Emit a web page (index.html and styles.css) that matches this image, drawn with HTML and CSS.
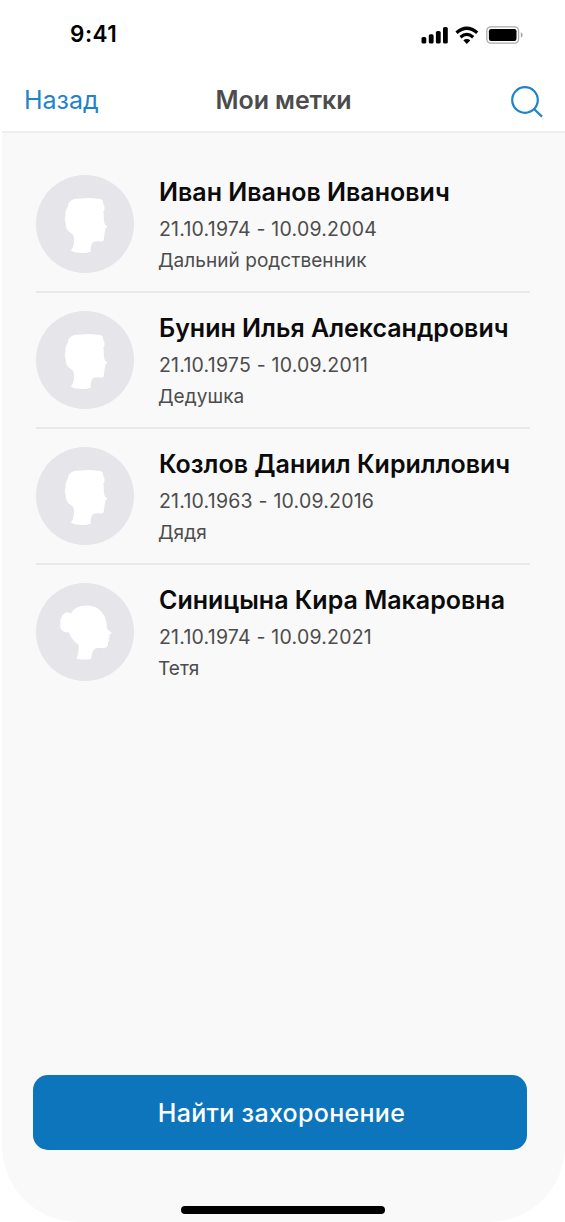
FILE: index.html
```html
<!DOCTYPE html>
<html lang="ru">
<head>
<meta charset="utf-8">
<title>Мои метки</title>
<link rel="stylesheet" href="styles.css">
</head>
<body>
<svg class="symbols" aria-hidden="true">
  <symbol id="man" viewBox="33 29 295 295">
    <circle cx="180.500" cy="176.500" r="147.500" fill="#e5e5ea"/>
    <path fill="#fff" d="M138 257Q148 244 147 228V214Q142 204 131 199Q121 188 123 176Q117 162 122 150Q120 136 129 124Q129 111 140 105Q150 98 169 100Q196 96 222 101Q235 101 235 112Q235 118 239 122V135L235 140Q238 145 237 160Q238 172 240 176L247 185Q247 188 241 190L242 196L239 203L240 209L237 213Q240 228 231 230Q213 227 205 231Q198 237 197 260Q182 265 163 263Q149 263 138 257Z"/>
  </symbol>
  <symbol id="woman" viewBox="33 32 295 295">
    <circle cx="180.500" cy="179.500" r="147.500" fill="#e5e5ea"/>
    <path fill="#fff" d="M155 259Q163 242 161 219Q140 204 132 181Q114 182 107 170Q105 160 106 147Q109 124 125 121Q132 120 138 124Q150 101 181 100Q211 99 228 116Q241 130 244 145Q247 158 246 166Q247 172 253 176L260 182Q261 185 254 188L255 195L251 200L253 205L250 209Q252 220 246 225Q240 230 225 227Q208 227 203 240L199 261Q180 265 155 259Z"/>
  </symbol>
</svg>
<div class="screen">
  <header class="header">
    <div class="status">
      <span class="time">9:41</span>
      <svg class="status-icons" viewBox="0 0 104 20">
        <g fill="#000">
          <rect x="1.500" y="13" width="4.800" height="6.500" rx="1.600"/>
          <rect x="8.800" y="10.200" width="4.800" height="9.300" rx="1.600"/>
          <rect x="15.900" y="7" width="4.800" height="12.500" rx="1.600"/>
          <rect x="23" y="3" width="4.800" height="16.500" rx="1.600"/>
        </g>
        <g fill="none" stroke="#000" stroke-width="3.200">
          <path d="M36.500 8.800Q46.800 -.3 57.200 8.800"/>
          <path d="M40.500 13.200Q46.800 7.500 53.200 13.200"/>
        </g>
        <path d="M43.300 16.200Q46.800 13.700 50.400 16.200L46.800 20Z"/>
        <rect x="66.800" y="2.900" width="31.800" height="16.200" rx="4" fill="none" stroke="#aaa" stroke-width="1.300"/>
        <rect x="68.900" y="5" width="27.600" height="12" rx="2.200"/>
        <path d="M100.800 8.300Q102.800 9.200 102.800 11T100.800 13.700Z" fill="#aaa"/>
      </svg>
    </div>
    <nav class="nav">
      <a class="back">Назад</a>
      <h1 class="title">Мои метки</h1>
      <svg class="search" viewBox="0 0 32 32" fill="none" stroke="#1f83c9" stroke-width="2.200">
        <circle cx="14" cy="14" r="12.800"/>
        <path d="M23 23L31 30.600"/>
      </svg>
    </nav>
  </header>
  <main class="list">
    <article class="person">
      <svg class="avatar"><use href="#man"/></svg>
      <div class="info">
        <h2 class="name">Иван Иванов Иванович</h2>
        <p class="dates">21.10.1974 - 10.09.2004</p>
        <p class="relation">Дальний родственник</p>
      </div>
    </article>
    <article class="person">
      <svg class="avatar"><use href="#man"/></svg>
      <div class="info">
        <h2 class="name">Бунин Илья Александрович</h2>
        <p class="dates">21.10.1975 - 10.09.2011</p>
        <p class="relation">Дедушка</p>
      </div>
    </article>
    <article class="person">
      <svg class="avatar"><use href="#man"/></svg>
      <div class="info">
        <h2 class="name">Козлов Даниил Кириллович</h2>
        <p class="dates">21.10.1963 - 10.09.2016</p>
        <p class="relation">Дядя</p>
      </div>
    </article>
    <article class="person">
      <svg class="avatar"><use href="#woman"/></svg>
      <div class="info">
        <h2 class="name">Синицына Кира Макаровна</h2>
        <p class="dates">21.10.1974 - 10.09.2021</p>
        <p class="relation">Тетя</p>
      </div>
    </article>
  </main>
  <footer class="footer">
    <button class="find">Найти захоронение</button>
    <div class="home-bar"></div>
  </footer>
</div>
</body>
</html>
```
FILE: styles.css
```css
* { box-sizing: border-box; }
body {
  margin: 0;
  background: #fff;
  font-family: Inter, "Liberation Sans", sans-serif;
  color: #4c4c4c;
}
h1, h2, p { margin: 0; }
.symbols { display: none; }
.screen {
  display: flex;
  flex-direction: column;
  height: 1222px;
  margin-left: 2px;
  background: #f9f9f9;
  border-radius: 0 0 76px 76px;
  overflow: hidden;
}
.header {
  height: 133px;
  background: #fff;
  border-bottom: 2px solid #eee;
}
.status {
  display: flex;
  justify-content: space-between;
  height: 69px;
  padding: 23px 41px 0 68px;
}
.time {
  font-size: 22.5px;
  line-height: 22px;
  font-weight: 600;
  letter-spacing: 0.5px;
  color: #000;
}
.status-icons { width: 104px; height: 20px; margin-top: 1px; }
.nav {
  display: grid;
  grid-template-columns: 1fr auto 1fr;
  align-items: center;
  height: 62px;
  padding: 0 22px;
}
.back { font-size: 25px; color: #1f83c9; }
.title { font-size: 25px; font-weight: 600; letter-spacing: -0.1px; }
.search { width: 32px; height: 32px; justify-self: end; margin-top: 3px; }
.list { flex: 1; padding: 24px 35px 0 34px; }
.person {
  display: flex;
  gap: 25px;
  height: 136px;
  padding-top: 18px;
  border-bottom: 2px solid #e9e9e9;
}
.person:last-child { border-bottom: 0; }
.avatar { width: 98px; height: 98px; flex: none; }
.info { white-space: nowrap; }
.name {
  font-size: 25px;
  line-height: 34px;
  font-weight: 600;
  color: #0b0b0b;
}
.dates {
  margin-top: 4px;
  font-size: 19.5px;
  line-height: 32px;
  letter-spacing: 0.22px;
}
.relation { margin-left: -1px; font-size: 19px; line-height: 32px; letter-spacing: 0.05px; }
.footer {
  display: flex;
  flex-direction: column;
  align-items: center;
  height: 147px;
  padding: 0 38px 0 31px;
}
.find {
  width: 100%;
  height: 75px;
  padding: 0 0 0 3px;
  border: 0;
  border-radius: 15px;
  background: #0d75bc;
  color: #fff;
  font: 500 25px Inter, sans-serif;
  letter-spacing: 0.3px;
}
.home-bar {
  width: 204px;
  height: 8px;
  margin: 56px 0 0 6px;
  border-radius: 4px;
  background: #000;
}
```
